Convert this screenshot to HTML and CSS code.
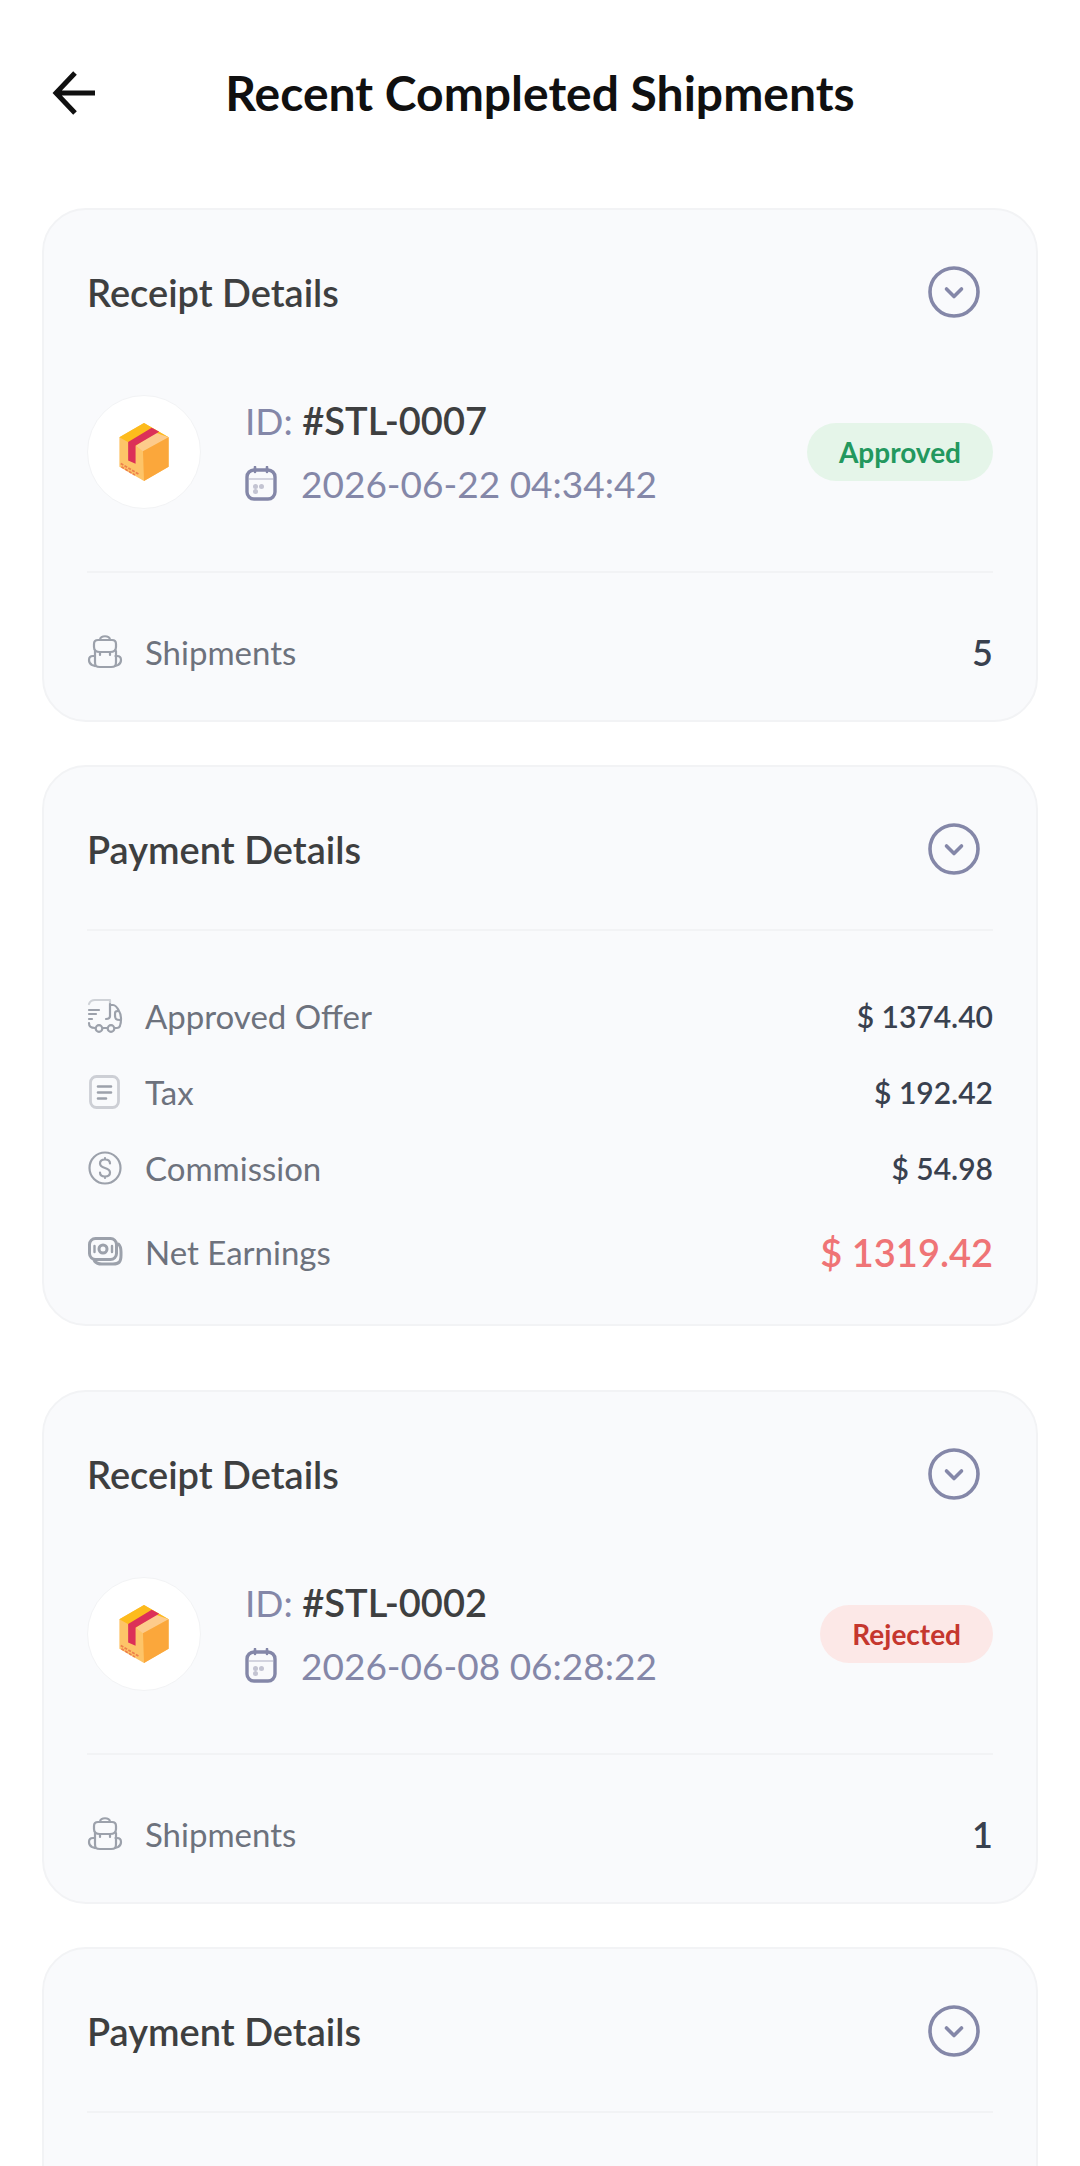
FILE: index.html
```html
<!DOCTYPE html>
<html lang="en">
<head>
    <meta charset="utf-8">
    <meta content="width=device-width, initial-scale=1" name="viewport">
    <title>Recent Completed Shipments</title>
    <link rel="stylesheet" href="styles.css">
</head>

<body>
<!-- shared icons -->
<svg class="sprite" aria-hidden="true">
    <symbol id="chevron" viewBox="0 0 52 52">
        <circle cx="26" cy="26" r="24" fill="none" stroke="currentColor" stroke-width="3.6"/>
        <path d="M18.5 23l7.5 7.5 7.5-7.5" fill="none" stroke="currentColor" stroke-width="3.6" stroke-linecap="round" stroke-linejoin="round"/>
    </symbol>
    <symbol id="package" viewBox="0 0 146 172">
        <path d="M73 0L0 42v88l73 42 73-42V42z" fill="#fdc468"/>
        <path d="M73 0L0 42l68 38 78-38z" fill="#fdbb1c"/>
        <path d="M48 68l58-40 40 14-76 42z" fill="#fdcb8c"/>
        <path d="M70 84l76-42v88l-73 42z" fill="#fba73b"/>
        <path d="M26 56l70-42 22 12-70 41v54l-22-10z" fill="#dc3058"/>
        <path d="M4 120l54 32M6 130l40 24" stroke="#ee7f4c" stroke-width="5" stroke-dasharray="9 4"/>
    </symbol>
    <symbol id="calendar" viewBox="0 0 32 36">
        <rect x="2" y="4" width="28" height="29" rx="7" fill="none" stroke="currentColor" stroke-width="3.4"/>
        <path d="M10 1v5M22 1v5" stroke="currentColor" stroke-width="2.6" stroke-linecap="round"/>
        <path d="M4 13h24" stroke="#d3d4df" stroke-width="2"/>
        <g fill="#c3c4d2"><circle cx="10.500" cy="20.500" r="2.500"/><circle cx="16.500" cy="20.500" r="2.500"/><circle cx="10.500" cy="25.500" r="2.500"/></g>
    </symbol>
    <symbol id="backpack" viewBox="0 0 36 36">
        <g fill="none" stroke="currentColor" stroke-width="2.2" stroke-linecap="round" stroke-linejoin="round">
            <path d="M13 6c0-5 10-5 10 0"/>
            <path d="M11 6h14c3 0 4 1 4 4v3c0 4-3 5-6 5H13c-3 0-6-1-6-5v-3c0-3 1-4 4-4z"/>
            <path d="M8 17v11c0 4 1 5 5 5h11c4 0 5-1 5-5V17M13 19v2M23 19v2"/>
            <path d="M7.500 22H6c-3 0-4 1-4 4 0 3 1 4 3 5l3 1M28.500 22H30c3 0 4 1 4 4 0 3-1 4-3 5l-3 1"/>
        </g>
    </symbol>
    <symbol id="truck" viewBox="0 0 36 36">
        <g fill="none" stroke="currentColor" stroke-width="2.2" stroke-linecap="round" stroke-linejoin="round">
            <path d="M2 6c1-3 3-4 6-4h15v4" opacity=".45"/>
            <path d="M23 6v12c0 2-1 3-4 3"/>
            <path d="M23 7h3c3 0 5 4 6 6 2 3 2 5 2 8 0 6-1 9-4 9h-2M20 30h-4M8 30c-4 0-6-1-6-5"/>
            <path d="M31 13c-3 0-3 1-3 4 0 4 1 5 5 5"/>
            <path d="M2 12h10M2 16h7M2 21h3"/>
            <circle cx="12" cy="30.500" r="3.300"/><circle cx="24" cy="30.500" r="3.300"/>
        </g>
    </symbol>
    <symbol id="receipt" viewBox="0 0 36 36">
        <rect x="3.500" y="2.500" width="28" height="31" rx="6" fill="none" stroke="#cdcfd5" stroke-width="2.800"/>
        <path d="M11 12.500h13M11 18.500h13M11 24.500h8" stroke="currentColor" stroke-width="2.600" stroke-linecap="round"/>
    </symbol>
    <symbol id="dollar" viewBox="0 0 36 36">
        <g fill="none" stroke="currentColor" stroke-width="2.2" stroke-linecap="round">
            <circle cx="18" cy="18" r="15.500"/>
            <path d="M23 13.500c0-2.500-2-4-5-4s-5 1.500-5 4c0 6 10 3 10 9 0 2.500-2 4-5 4s-5-1.500-5-4M18 9.500V8M18 28v-1.500"/>
        </g>
    </symbol>
    <symbol id="cash" viewBox="0 0 36 36">
        <g fill="none" stroke="currentColor" stroke-width="3" stroke-linecap="round">
            <rect x="2.500" y="4.500" width="27" height="21" rx="6"/>
            <path d="M31.500 10c2 2 2.500 4 2.500 8v3c0 7-2 9-8 9H15c-4 0-6-1-7.500-3"/>
            <circle cx="16" cy="15" r="4"/>
            <path d="M7.500 12v6M25 12v6" stroke-width="2.400"/>
        </g>
    </symbol>
</svg>

<div class="screen">
    <header class="topbar">
        <button class="back" type="button" aria-label="Back">
            <svg width="44" height="44" viewBox="0 0 44 44" fill="none" stroke="currentColor" stroke-width="5">
                <path d="M43 22H5M23 2L4 22l19 20"/>
            </svg>
        </button>
        <h1>Recent Completed Shipments</h1>
    </header>

    <main>
        <article class="shipment">
            <section class="card">
                <div class="card-head">
                    <h2>Receipt Details</h2>
                    <button class="toggle" type="button" aria-label="Toggle receipt details"><svg><use href="#chevron"/></svg></button>
                </div>
                <div class="receipt">
                    <div class="avatar"><svg><use href="#package"/></svg></div>
                    <div class="receipt-info">
                        <p>ID: <strong>#STL-0007</strong></p>
                        <p class="date"><svg><use href="#calendar"/></svg><time datetime="2026-06-22T04:34:42">2026-06-22 04:34:42</time></p>
                    </div>
                    <span class="badge approved">Approved</span>
                </div>
                <hr>
                <dl class="rows">
                    <div class="count">
                        <dt><svg><use href="#backpack"/></svg>Shipments</dt>
                        <dd>5</dd>
                    </div>
                </dl>
            </section>

            <section class="card payment">
                <div class="card-head">
                    <h2>Payment Details</h2>
                    <button class="toggle" type="button" aria-label="Toggle payment details"><svg><use href="#chevron"/></svg></button>
                </div>
                <hr>
                <dl class="rows">
                    <div>
                        <dt><svg><use href="#truck"/></svg>Approved Offer</dt>
                        <dd>$ 1374.40</dd>
                    </div>
                    <div>
                        <dt><svg><use href="#receipt"/></svg>Tax</dt>
                        <dd>$ 192.42</dd>
                    </div>
                    <div>
                        <dt><svg><use href="#dollar"/></svg>Commission</dt>
                        <dd>$ 54.98</dd>
                    </div>
                    <div class="net">
                        <dt><svg><use href="#cash"/></svg>Net Earnings</dt>
                        <dd>$ 1319.42</dd>
                    </div>
                </dl>
            </section>
        </article>

        <article class="shipment">
            <section class="card">
                <div class="card-head">
                    <h2>Receipt Details</h2>
                    <button class="toggle" type="button" aria-label="Toggle receipt details"><svg><use href="#chevron"/></svg></button>
                </div>
                <div class="receipt">
                    <div class="avatar"><svg><use href="#package"/></svg></div>
                    <div class="receipt-info">
                        <p>ID: <strong>#STL-0002</strong></p>
                        <p class="date"><svg><use href="#calendar"/></svg><time datetime="2026-06-08T06:28:22">2026-06-08 06:28:22</time></p>
                    </div>
                    <span class="badge rejected">Rejected</span>
                </div>
                <hr>
                <dl class="rows">
                    <div class="count">
                        <dt><svg><use href="#backpack"/></svg>Shipments</dt>
                        <dd>1</dd>
                    </div>
                </dl>
            </section>

            <section class="card payment loading">
                <div class="card-head">
                    <h2>Payment Details</h2>
                    <button class="toggle" type="button" aria-label="Toggle payment details"><svg><use href="#chevron"/></svg></button>
                </div>
                <hr>
            </section>
        </article>
    </main>
</div>
</body>
</html>
```
FILE: styles.css
```css
* {
    box-sizing: border-box;
}

body {
    margin: 0;
    background: #fff;
    color: #3e3f40;
    font-family: Lato, sans-serif;
    font-size: 33px;
}

h1, h2, p, dl, dd {
    margin: 0;
}

button {
    padding: 0;
    border: 0;
    background: none;
    cursor: pointer;
}

svg {
    display: block;
    flex: none;
}

.sprite {
    position: absolute;
    width: 0;
    height: 0;
}

.screen {
    height: 100vh;
    overflow: hidden;
}

/* title stays centered, the arrow sits in the left column */
.topbar {
    display: grid;
    grid-template-columns: 44px 1fr 44px;
    align-items: center;
    height: 208px;
    padding: 0 52px 22px;
    color: #101010;
}

.back {
    color: inherit;
}

h1 {
    text-align: center;
    font-size: 48px;
    font-weight: 700;
    line-height: 60px;
}

main {
    display: flex;
    flex-direction: column;
    gap: 64px;
    padding: 0 42px;
}

.shipment {
    display: flex;
    flex-direction: column;
    gap: 43px;
}

.card {
    padding: 56px 43px 40px;
    background: #f9fafc;
    border: 2px solid #f2f3f5;
    border-radius: 44px;
}

.card-head {
    display: flex;
    justify-content: space-between;
    align-items: center;
    padding-right: 13px;
}

h2 {
    font-size: 38px;
    font-weight: 600;
    line-height: 52px;
}

.toggle,
.toggle svg {
    width: 52px;
    height: 52px;
    color: #8487a8;
}

.receipt {
    display: flex;
    align-items: center;
    margin-top: 71px;
}

.avatar {
    display: flex;
    align-items: center;
    justify-content: center;
    width: 114px;
    height: 114px;
    background: #fff;
    border: 1px solid #f2f3f5;
    border-radius: 50%;
}

.avatar svg {
    width: 50px;
    height: 58px;
}

.receipt-info {
    flex: 1;
    margin-left: 44px;
    color: #8487a8;
    font-size: 37px;
    line-height: 63px;
}

.receipt-info strong {
    color: #3e3f40;
    font-size: 38px;
    font-weight: 600;
}

.date {
    display: flex;
    align-items: center;
    gap: 24px;
}

.date svg {
    width: 32px;
    height: 36px;
}

.badge {
    padding: 0 32px;
    border-radius: 29px;
    font-size: 28px;
    font-weight: 700;
    line-height: 58px;
}

.approved {
    background: #e5f5e9;
    color: #23985e;
}

.rejected {
    background: #fce8e7;
    color: #c5372e;
}

hr {
    height: 2px;
    margin: 56px 0 51px;
    border: 0;
    background: #f2f3f5;
}

.payment hr {
    margin: 54px 0 61px;
}

.rows {
    display: flex;
    flex-direction: column;
    gap: 28px;
    line-height: 48px;
}

.rows div {
    display: flex;
    justify-content: space-between;
    align-items: center;
}

.rows dt {
    display: flex;
    align-items: center;
    gap: 22px;
    color: #6d727d;
}

.rows dt svg {
    width: 36px;
    height: 36px;
    color: #9ca1ab;
}

.rows dd {
    color: #39414f;
    font-size: 30px;
    font-weight: 600;
}

.rows .count dd {
    font-size: 36px;
    line-height: 56px;
}

.rows .net dd {
    color: #ef7476;
    font-size: 38px;
    line-height: 64px;
}

.loading {
    padding-bottom: 100px;
}
```
